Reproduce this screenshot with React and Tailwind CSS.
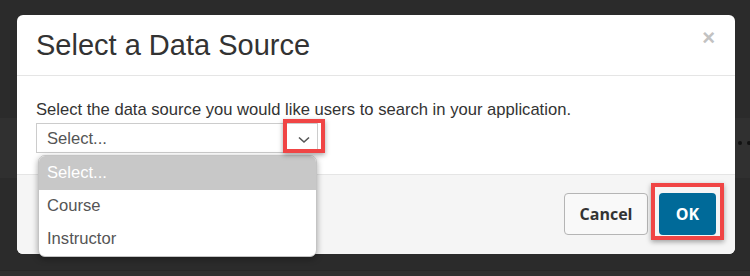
export default function App() {
  return (
    <div className="relative w-[750px] h-[276px] overflow-hidden bg-[#2b2b2b] font-['Liberation_Sans',Arial,sans-serif]">
      {/* background page hints */}
      <div className="absolute left-0 top-[118px] w-[750px] h-[60px] bg-[#303030]" />
      <div className="absolute left-[738px] top-[141px] w-[4px] h-[4px] rounded-full bg-[#111]" />
      <div className="absolute left-[747px] top-[141px] w-[4px] h-[4px] rounded-full bg-[#111]" />
      <div className="absolute left-0 top-[270px] w-[750px] h-[6px] bg-[#2e2e2e] border-t border-[#262626]" />

      <div className="relative pt-[15px] pl-[17px]">
        <div className="w-[718px] h-[239px] bg-white rounded-[6px] flex flex-col">
          {/* header */}
          <div className="h-[61px] border-b border-[#e5e5e5] flex items-center justify-between pl-[19px] pr-[20px]">
            <h1 className="text-[29px] leading-[32px] text-[#333]">Select a Data Source</h1>
            <span className="text-[22px] font-bold leading-none text-[#c2c2c2] -mt-[14px]">×</span>
          </div>
          {/* body */}
          <div className="flex-1 pt-[24px] pl-[19px]">
            <p className="text-[16.6px] leading-[20px] text-[#333]">
              Select the data source you would like users to search in your application.
            </p>
            <div className="mt-[3px] w-[282px] h-[30px] border border-[#ccc] flex justify-between pl-[10px] pr-[6px]">
              <span className="pt-[5px] text-[16.6px] leading-[20px] text-[#555]">Select...</span>
              <svg width="14" height="30" viewBox="0 0 14 30" className="block">
                <path d="M2 13.5 L7 18 L12 13.5" fill="none" stroke="#555" strokeWidth="1.6" />
              </svg>
            </div>
          </div>
          {/* footer */}
          <div className="h-[80px] border-t border-[#e5e5e5] bg-[#f5f5f5] rounded-b-[6px] flex justify-end items-start pt-[18px] pr-[19px] gap-[11px]">
            <button className="w-[84px] h-[42px] rounded-[4px] border border-[#b5b5b5] bg-[#f9f9f9] text-[16px] font-bold text-[#333] font-['Open_Sans',sans-serif]">
              Cancel
            </button>
            <button className="w-[57px] h-[42px] rounded-[4px] bg-[#006a99] text-[16px] font-bold text-white font-['Open_Sans',sans-serif]">
              OK
            </button>
          </div>
        </div>
      </div>

      {/* dropdown list */}
      <div className="absolute left-[38px] top-[155px] w-[279px] h-[102px] bg-white rounded-[7px] overflow-hidden border border-[#c4c4c4] shadow-[0_2px_6px_rgba(0,0,0,0.35)]">
        <div className="h-[34px] bg-[#c8c8c8] flex items-center pl-[8px] text-[16.6px] text-white">Select...</div>
        <div className="h-[33px] flex items-center pl-[8px] text-[16.6px] text-[#555]">Course</div>
        <div className="h-[33px] flex items-center pl-[8px] text-[16.6px] text-[#555]">Instructor</div>
      </div>

      {/* highlight boxes */}
      <div className="absolute left-[283px] top-[119px] w-[42px] h-[34px] border-[4px] border-[#f04545] shadow-[0_2px_5px_rgba(0,0,0,0.35)]" />
      <div className="absolute left-[651px] top-[183px] w-[73px] h-[57px] border-[4px] border-[#f04545] shadow-[0_2px_5px_rgba(0,0,0,0.35)]" />
    </div>
  );
}
